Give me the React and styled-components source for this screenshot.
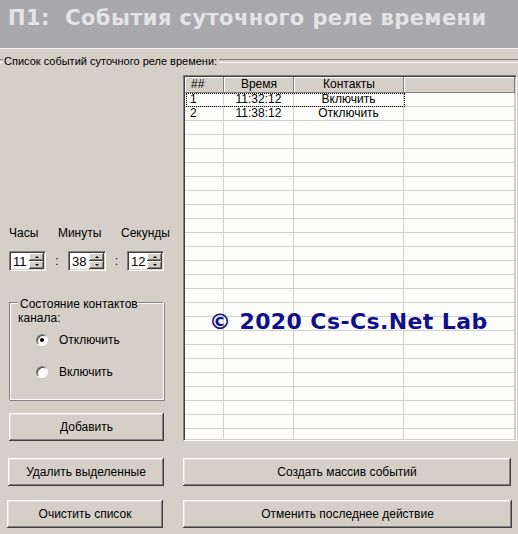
import React from "react";
import styled, { createGlobalStyle } from "styled-components";

const GlobalStyle = createGlobalStyle`
  html, body {
    margin: 0;
    padding: 0;
    background: #d4d0c8;
  }
  * { box-sizing: border-box; }
`;

const Page = styled.div`
  width: 518px;
  height: 534px;
  background: #d4d0c8;
  font-family: "Liberation Sans", Arial, sans-serif;
  font-size: 12px;
  color: #000;
  overflow: hidden;
  display: flex;
  flex-direction: column;
`;

const TitleBar = styled.div`
  height: 49px;
  flex-shrink: 0;
  background: #a9a8ac;
  border-bottom: 1px solid #f4f4f4;
  padding: 6px 0 0 8px;
  font-family: "DejaVu Sans", Verdana, sans-serif;
  font-weight: bold;
  font-size: 21px;
  color: #e4e4e6;
  white-space: pre;
  letter-spacing: 0.4px;
`;

const Legend = styled.div`
  display: flex;
  align-items: center;
  height: 16px;
  margin-top: 4px;
  font-size: 11px;
  &::before, &::after {
    content: "";
    height: 2px;
    border-top: 1px solid #808080;
    border-bottom: 1px solid #fff;
  }
  &::before { width: 3px; margin-right: 1px; }
  &::after { flex: 1; margin-left: 2px; }
`;

const Main = styled.div`
  display: flex;
  gap: 19px;
  margin-top: 6px;
  padding-left: 9px;
`;

const LeftCol = styled.div`
  width: 155px;
  display: flex;
  flex-direction: column;
  justify-content: flex-end;
`;

const TimeLabels = styled.div`
  display: flex;
  justify-content: space-between;
  margin-right: -6px;
`;

const TimeRow = styled.div`
  display: flex;
  align-items: center;
  margin-top: 11px;
`;

const Colon = styled.span`
  width: ${(p) => p.$w}px;
  text-align: center;
`;

const Spin = styled.div`
  display: flex;
  width: ${(p) => p.$w}px;
  height: 20px;
  background: #fff;
  border-top: 1px solid #808080;
  border-left: 1px solid #808080;
  border-right: 1px solid #fff;
  border-bottom: 1px solid #fff;
  box-shadow: inset 1px 1px 0 #404040, inset -1px -1px 0 #d4d0c8;
`;

const SpinValue = styled.div`
  flex: 1;
  padding: 2px 0 0 3px;
  font-size: 13px;
`;

const SpinButtons = styled.div`
  width: 16px;
  display: flex;
  flex-direction: column;
  padding: 1px 1px 1px 0;
`;

const SpinBtn = styled.div`
  flex: 1;
  background: #d4d0c8;
  box-shadow: inset -1px -1px 0 #404040, inset 1px 1px 0 #fff, inset -2px -2px 0 #808080;
  display: flex;
  align-items: center;
  justify-content: center;
  &::after {
    content: "";
    border-left: 2px solid transparent;
    border-right: 2px solid transparent;
    ${(p) => (p.$up ? "border-bottom: 2px solid #000;" : "border-top: 2px solid #000;")}
  }
`;

const GroupBox = styled.div`
  margin-top: 31px;
  height: 98px;
  border-top: 1px solid #808080;
  border-left: 1px solid #808080;
  border-right: 1px solid #fff;
  border-bottom: 1px solid #fff;
  box-shadow: inset 1px 1px 0 #fff, 1px 1px 0 #808080;
`;

const GroupTitle = styled.div`
  margin: -6px 0 0 8px;
  width: 128px;
  line-height: 14px;
  font-size: 12px;
  span {
    background: #d4d0c8;
    padding: 0 3px 0 2px;
  }
`;

const RadioList = styled.div`
  display: flex;
  flex-direction: column;
  gap: 19px;
  padding: 8px 0 0 26px;
`;

const RadioItem = styled.label`
  display: flex;
  align-items: center;
  gap: 11px;
  height: 13px;
`;

const RadioCircle = styled.span`
  width: 12px;
  height: 12px;
  border-radius: 50%;
  background: #fff;
  border: 1px solid;
  border-color: #808080 #fff #fff #808080;
  box-shadow: inset 1px 1px 0 #404040;
  display: flex;
  align-items: center;
  justify-content: center;
  &::after {
    content: "";
    width: 4px;
    height: 4px;
    border-radius: 50%;
    background: ${(p) => (p.$checked ? "#000" : "transparent")};
  }
`;

const Button = styled.div`
  width: ${(p) => p.$w}px;
  height: 28px;
  margin-left: ${(p) => p.$ml || 0}px;
  background: #d4d0c8;
  box-shadow: inset -1px -1px 0 #404040, inset 1px 1px 0 #fff, inset -2px -2px 0 #808080, inset 2px 2px 0 #e4e2dc;
  display: flex;
  align-items: center;
  justify-content: center;
  font-size: 12px;
`;

const AddButton = styled(Button)`
  margin-top: 13px;
`;

const TableWrap = styled.div`
  position: relative;
  width: 334px;
  height: 366px;
  background: #fdfdfb;
  border-top: 1px solid #808080;
  border-left: 1px solid #808080;
  border-right: 1px solid #fff;
  border-bottom: 1px solid #fff;
  box-shadow: inset 1px 1px 0 #404040, inset -1px -1px 0 #d4d0c8;
  padding: 1px;
  overflow: hidden;
`;

const Grid = styled.div`
  display: grid;
  grid-template-columns: 39px 70px 110px 111px;
`;

const HeadCell = styled.div`
  height: 16px;
  background: #d4d0c8;
  box-shadow: inset -1px -1px 0 #808080, inset 1px 1px 0 #fff;
  text-align: ${(p) => (p.$left ? "left" : "center")};
  padding-left: ${(p) => (p.$left ? 6 : 0)}px;
  line-height: 15px;
  font-size: 12px;
`;

const Cell = styled.div`
  height: 14px;
  border-right: 1px solid #d0d0d0;
  border-bottom: 1px solid #d0d0d0;
  line-height: 13px;
  font-size: 12px;
  text-align: ${(p) => (p.$left ? "left" : "center")};
  padding-left: ${(p) => (p.$left ? 5 : 0)}px;
  white-space: nowrap;
`;

const FocusBox = styled.div`
  position: absolute;
  left: 2px;
  top: 17px;
  width: 219px;
  height: 14px;
  border: 1px dotted #000;
  pointer-events: none;
`;

const Watermark = styled.div`
  position: absolute;
  left: 25px;
  top: 233px;
  font-family: "DejaVu Sans", Verdana, sans-serif;
  font-weight: bold;
  font-size: 22px;
  letter-spacing: 0.4px;
  color: #10108c;
  white-space: nowrap;
`;

const BottomRow = styled.div`
  display: flex;
  margin-top: ${(p) => p.$mt}px;
  padding-left: ${(p) => p.$pl}px;
`;

const events = [
  ["1", "11:32:12", "Включить"],
  ["2", "11:38:12", "Отключить"],
];

export default function App() {
  const rows = [];
  for (let i = 0; i < 25; i++) {
    const e = events[i] || ["", "", ""];
    rows.push(
      <React.Fragment key={i}>
        <Cell $left>{e[0]}</Cell>
        <Cell>{e[1]}</Cell>
        <Cell>{e[2]}</Cell>
        <Cell />
      </React.Fragment>
    );
  }

  return (
    <Page>
      <GlobalStyle />
      <TitleBar>П1:  События суточного реле времени</TitleBar>
      <Legend>Список событий суточного реле времени:</Legend>
      <Main>
        <LeftCol>
          <TimeLabels>
            <span>Часы</span>
            <span>Минуты</span>
            <span>Секунды</span>
          </TimeLabels>
          <TimeRow>
            <Spin $w={37}>
              <SpinValue>11</SpinValue>
              <SpinButtons>
                <SpinBtn $up />
                <SpinBtn />
              </SpinButtons>
            </Spin>
            <Colon $w={22}>:</Colon>
            <Spin $w={38}>
              <SpinValue>38</SpinValue>
              <SpinButtons>
                <SpinBtn $up />
                <SpinBtn />
              </SpinButtons>
            </Spin>
            <Colon $w={21}>:</Colon>
            <Spin $w={37}>
              <SpinValue>12</SpinValue>
              <SpinButtons>
                <SpinBtn $up />
                <SpinBtn />
              </SpinButtons>
            </Spin>
          </TimeRow>
          <GroupBox>
            <GroupTitle>
              <span>Состояние контактов канала:</span>
            </GroupTitle>
            <RadioList>
              <RadioItem>
                <RadioCircle $checked />
                Отключить
              </RadioItem>
              <RadioItem>
                <RadioCircle />
                Включить
              </RadioItem>
            </RadioList>
          </GroupBox>
          <AddButton $w={155}>Добавить</AddButton>
        </LeftCol>
        <TableWrap>
          <Grid>
            <HeadCell $left>##</HeadCell>
            <HeadCell>Время</HeadCell>
            <HeadCell>Контакты</HeadCell>
            <HeadCell />
            {rows}
          </Grid>
          <FocusBox />
          <Watermark>© 2020 Cs-Cs.Net Lab</Watermark>
        </TableWrap>
      </Main>
      <BottomRow $mt={17} $pl={8}>
        <Button $w={156}>Удалить выделенные</Button>
        <Button $w={328} $ml={19}>Создать массив событий</Button>
      </BottomRow>
      <BottomRow $mt={14} $pl={7}>
        <Button $w={156}>Очистить список</Button>
        <Button $w={329} $ml={20}>Отменить последнее действие</Button>
      </BottomRow>
    </Page>
  );
}
